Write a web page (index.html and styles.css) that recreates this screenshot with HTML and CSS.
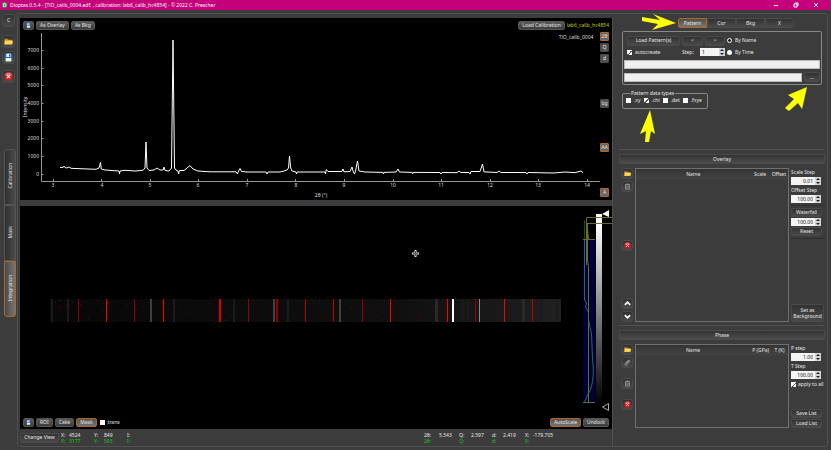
FILE: index.html
```html
<!DOCTYPE html>
<html lang="en">
<head>
    <meta charset="UTF-8">
    <title>Dioptas 0.5.4</title>
    <link rel="stylesheet" href="styles.css">
</head>
<body>
    <svg class="sprite" aria-hidden="true">
        <symbol id="folder" viewBox="0 0 16 16">
            <path d="M1 3h5l2 2h6v8H1z" fill="#c98a10"/>
            <path d="M1 13V6h14v7z" fill="#f3bd35"/>
            <path d="M1 13l2-6h13l-2 6z" fill="#ffd75e"/>
        </symbol>
        <symbol id="disk" viewBox="0 0 16 16">
            <path d="M1 1h14v14H1z" fill="#2467b5"/>
            <path d="M4 1h8v6H4z" fill="#e6f1ff"/>
            <path d="M9 2h2v4H9z" fill="#1c4d8c"/>
            <path d="M3 9h10v6H3z" fill="#fff7bd"/>
        </symbol>
        <symbol id="clear" viewBox="0 0 16 16">
            <circle cx="8" cy="8" r="7.5" fill="#d5171c"/>
            <path d="M2 6a6 5 0 0 1 12 0" fill="#ed6262"/>
            <path d="M5 5l6 6M11 5l-6 6" stroke="#fff" stroke-width="2"/>
        </symbol>
        <symbol id="trash" viewBox="0 0 16 16">
            <path d="M2 4h12M6 4V2h4v2M3.500 4v10h9V4M6.500 6v6M9.500 6v6" fill="none" stroke="#aaa" stroke-width="1.500"/>
        </symbol>
        <symbol id="clip" viewBox="0 0 16 16">
            <path d="M4 10l6-7c2-2 5 0 3 3l-7 8c-3 2-5-1-3-4l7-7M6 11l5-6" fill="none" stroke="#bbb" stroke-width="1.500"/>
        </symbol>
        <symbol id="up" viewBox="0 0 16 16">
            <path d="M2 11l6-6 6 6" fill="none" stroke="#fff" stroke-width="4"/>
        </symbol>
        <symbol id="down" viewBox="0 0 16 16">
            <path d="M2 5l6 6 6-6" fill="none" stroke="#fff" stroke-width="4"/>
        </symbol>
        <symbol id="spin" viewBox="0 0 6 8">
            <path d="M0 0h6v8H0z" fill="#d4d4d4"/>
            <path d="M1 3l2-2 2 2zM1 5l2 2 2-2z" fill="#222"/>
        </symbol>
    </svg>

    <header class="titlebar">
        <svg class="app-icon" viewBox="0 0 12 12"><path d="M0 0h12v12H0z" fill="#2d9b4a"/><path d="M4 2v8h2a4 4 0 0 0 0-8z" fill="none" stroke="#fff" stroke-width="2"/></svg>
        <span class="title">Dioptas 0.5.4 - [TiO_calib_0004.edf, , calibration: lab6_calib_hc4854] - © 2022 C. Prescher</span>
        <div class="window-buttons">
            <button aria-label="Minimize"><svg viewBox="0 0 6 6"><path d="M1 3.500h4"/></svg></button>
            <button aria-label="Restore"><svg viewBox="0 0 6 6"><path d="M1 2h3v3H1zM2 2V1h3v3H4"/></svg></button>
            <button aria-label="Close"><svg viewBox="0 0 6 6"><path d="M1 1l4 4M5 1L1 5"/></svg></button>
        </div>
    </header>

    <main class="app">
        <nav class="rail">
            <div class="rail-tools">
                <button class="tool rail-c">C</button>
                <button class="tool" aria-label="Open"><svg class="icon"><use href="#folder"/></svg></button>
                <button class="tool rail-save" aria-label="Save"><svg class="icon"><use href="#disk"/></svg></button>
                <button class="tool" aria-label="Reset"><svg class="icon"><use href="#clear"/></svg></button>
            </div>
            <div class="modes">
                <button class="mode"><span>Calibration</span></button>
                <button class="mode"><span>Mask</span></button>
                <button class="mode selected"><span>Integration</span></button>
            </div>
        </nav>

        <div class="workspace">
            <div class="views">
                <section class="plot pattern">
                    <div class="bar">
                        <button class="btn save" aria-label="Save pattern"><svg><use href="#disk"/></svg></button>
                        <button class="btn">As Overlay</button>
                        <button class="btn">As Bkg</button>
                        <button class="btn push">Load Calibration</button>
                        <span class="calib">lab6_calib_hc4854</span>
                    </div>
                    <div class="plot-body">
                        <svg class="chart" viewBox="21 31 579 168">
                            <path class="axis" d="M41.500 33v148.500H600M41.500 50.500h2M41.500 68.500h2M41.500 85.500h2M41.500 103.500h2M41.500 121.500h2M41.500 138.500h2M41.500 156.500h2M41.500 174.500h2M53.500 181v-2M101.500 181v-2M150.500 181v-2M198.500 181v-2M247.500 181v-2M295.500 181v-2M344.500 181v-2M393.500 181v-2M441.500 181v-2M490.500 181v-2M538.500 181v-2M587.500 181v-2"/>
                            <g class="ylabels">
                                <text x="39" y="52">7000</text>
                                <text x="39" y="70">6000</text>
                                <text x="39" y="87">5000</text>
                                <text x="39" y="105">4000</text>
                                <text x="39" y="123">3000</text>
                                <text x="39" y="140">2000</text>
                                <text x="39" y="158">1000</text>
                                <text x="39" y="176">0</text>
                            </g>
                            <g class="xlabels">
                                <text x="53" y="187">3</text>
                                <text x="102" y="187">4</text>
                                <text x="150" y="187">5</text>
                                <text x="198" y="187">6</text>
                                <text x="247" y="187">7</text>
                                <text x="296" y="187">8</text>
                                <text x="344" y="187">9</text>
                                <text x="393" y="187">10</text>
                                <text x="441" y="187">11</text>
                                <text x="490" y="187">12</text>
                                <text x="538" y="187">13</text>
                                <text x="587" y="187">14</text>
                                <text x="321" y="197">2θ (°)</text>
                                <text x="576" y="39">TiO_calib_0004</text>
                                <text transform="translate(27 107) rotate(-90)">Intensity</text>
                            </g>
                            <polyline class="curve" points="60,167.3 63,167.5 64,166 65,167.5 67,168 69,167 71,168.300 80,168.700 96,169.300 99,168 100.500,162.500 101.300,169 105,170 119,171 119.500,174 120,171 125,170.300 135,171 143,170.300 145,168 146,142 147,168 149,170.500 154,170 157,168 160,170 163,170 164,167 165,170.500 169,171 171.500,168 173,40 174.500,168 176,170 178,171 178.500,174 179.500,170.500 184,170.500 187,168 190,165.500 193,169 198,171 210,171.800 236,171.800 237.500,174 238.500,171 240,168.500 241.500,171.500 247,172 266,172 267,174 268,172 280,172 284,171 287,170 288.500,168 289.500,156 290.700,168 292,171 296,172 296.500,174 297,172 325,172 325.500,174 326.300,169.500 328,171.500 342,171.500 343,169 344,171.800 350,171.500 352,167 353,171 354.500,174 355.500,171 357.500,161 359,171 365,172 383,172.400 383.500,174 384,172.400 396,172 398,169 399.500,172 412,172.400 412.500,174 413,172.400 440,172.500 441,174 442,172.500 457,172.700 459,171 461,172.500 469,172.500 470,174 471,171.500 480,171.500 482.500,164 484,171.800 497,172.500 499,171 501,172.500 526,172.500 527,174 528,172.500 554,173 565,172 575,172.700 581,171 583,172.700"/>
                        </svg>
                        <div class="units">
                            <div class="unit-group">
                                <button class="unit on">2θ</button>
                                <button class="unit">Q</button>
                                <button class="unit">d</button>
                            </div>
                            <button class="unit">bg</button>
                            <button class="unit on">AA</button>
                            <button class="unit on">A</button>
                        </div>
                    </div>
                </section>

                <section class="plot image">
                    <svg class="chart" viewBox="20 206 592 209">
                        <defs>
                            <linearGradient id="strip"><stop offset="0" stop-color="#070707"/><stop offset=".7" stop-color="#101010"/><stop offset="1" stop-color="#202020"/></linearGradient>
                            <linearGradient id="levels" x2="0" y2="1"><stop offset=".05" stop-color="#fff"/><stop offset="1" stop-color="#000"/></linearGradient>
                        </defs>
                        <path d="M50 299h511v23H50z" fill="url(#strip)"/>
                        <g class="lines">
                            <path d="M52 299v23M68 299v23M174 299v23M234 299v23M288 299v23M541 299v23M463 299v23M468 299v23M557 299v23" stroke="#1a1a1a" stroke-width="2"/>
                            <path d="M436.500 299v23M523.500 299v23" stroke="#292929" stroke-width="3"/>
                            <path d="M151 299v23M274 299v23M340 299v23" stroke="#404040" stroke-width="2"/>
                            <path d="M479.500 299v23" stroke="#888"/>
                            <path d="M78.500 299v23M134.500 299v23M248.500 299v23M362.500 299v23M475.500 299v23" stroke="#950000"/>
                            <path d="M277 299v23" stroke="#900000" stroke-width="2"/>
                            <path d="M305.500 299v23M333.500 299v23M532.500 299v23" stroke="#b80000"/>
                            <path d="M106.500 299v23M163.500 299v23M390.500 299v23M447.500 299v23M504.500 299v23" stroke="#f80000"/>
                            <path d="M220 299v23" stroke="#d80000" stroke-width="2"/>
                            <path d="M453 299v23" stroke="#fff" stroke-width="2"/>
                            <path d="M55 302.500h1M60 300.500h1M61 306.500h1M66 304.500h1M68 306.500h1M72 302.500h1M58 307.500h1M80 304.500h1M82 302.500h1M88 318.500h1M97 300.500h1M101 302.500h1M102 310.500h1M109 302.500h1M114 302.500h1M126 305.500h1M143 306.500h1M148 302.500h1M122 315.500h1M168 309.500h1M180 308.500h1M186 312.500h1M194 316.500h1M209 303.500h1M225 320.500h1M230 316.500h1M253 300.500h1M293 315.500h1M312 301.500h1M322 318.500h1M351 307.500h1M366 310.500h1M371 314.500h1M376 316.500h1M381 303.500h1M411 300.500h1M418 317.500h1M420 315.500h1M432 306.500h1M438 306.500h1M485 303.500h1M487 300.500h1M481 307.500h1M499 317.500h1M513 313.500h1M544 310.500h1M550 318.500h1M555 313.500h1" stroke="#700000"/>
                        </g>
                        <path d="M583 239.500h12.500V402H583z" fill="#000034"/>
                        <path d="M584.500 220v20" stroke="#1c5208"/>
                        <path d="M584.500 240v60l2 3-1 4 3 5v8l3 14 1 25c2 15 0 30-5 36l-3 7" fill="none" stroke="#246b5d"/>
                        <path d="M612 217.500h-25.500V265M612 223.500h-25M587.500 223v38l1 5v136M583 239.500h12M583 402.500h12M587 223l1.500 16" fill="none" stroke="#686b32"/>
                        <path d="M596 214h6v190h-6z" fill="url(#levels)"/>
                        <path d="M596 217.500h6M596 223.500h6" stroke="#686b32"/>
                        <path d="M602 214l7-4v7z" fill="#fff"/>
                        <path d="M602.500 407l6-3.500v7z" fill="none" stroke="#aaa"/>
                        <path d="M412 253.500h7M415.500 250v7" stroke="#ddd" stroke-width="2"/>
                        <path d="M413 253.500h5M415.500 251v5" stroke="#556"/>
                    </svg>
                    <div class="bar">
                        <button class="btn save" aria-label="Save image"><svg><use href="#disk"/></svg></button>
                        <button class="btn">ROI</button>
                        <button class="btn">Cake</button>
                        <button class="btn on">Mask</button>
                        <label class="check"><input type="checkbox">trans</label>
                        <button class="btn push on">AutoScale</button>
                        <button class="btn">Undock</button>
                    </div>
                </section>

                <footer class="status">
                    <button class="flat">Change View</button>
                    <div class="mouse">
                        <span>X:</span><span>4524</span><span>Y:</span><span>849</span><span>I:</span>
                        <span class="click">X:</span><span class="click">3177</span><span class="click">Y:</span><span class="click">593</span><span class="click">I:</span>
                    </div>
                    <div class="mouse angles">
                        <span>2θ:</span><span>5.543</span><span>Q:</span><span>2.597</span><span>d:</span><span>2.419</span><span>X:</span><span>-179.705</span>
                        <span class="click">2θ:</span><span></span><span class="click">Q:</span><span></span><span class="click">d:</span><span></span><span class="click">X:</span><span></span>
                    </div>
                </footer>
            </div>

            <aside class="side">
                <section class="settings">
                    <div class="tabs">
                        <button class="tab selected">Pattern</button>
                        <button class="tab">Cor</button>
                        <button class="tab">Bkg</button>
                        <button class="tab">X</button>
                    </div>
                    <div class="group files">
                        <div class="loader">
                            <button class="flat">Load Pattern(s)</button>
                            <button class="flat">&lt;</button>
                            <button class="flat">&gt;</button>
                            <label class="check"><input type="radio" name="by" checked>By Name</label>
                            <label class="check"><input type="checkbox" checked>autocreate</label>
                            <div class="step">
                                <label for="step">Step:</label>
                                <span class="spin left"><input id="step" type="number" value="1"><svg><use href="#spin"/></svg></span>
                            </div>
                            <label class="check"><input type="radio" name="by">By Time</label>
                        </div>
                        <input class="line" type="text" aria-label="Pattern file">
                        <div class="path">
                            <input class="line" type="text" aria-label="Pattern folder">
                            <button class="flat">...</button>
                        </div>
                    </div>
                    <fieldset class="group types">
                        <legend>Pattern data types</legend>
                        <label class="check"><input type="checkbox">.xy</label>
                        <label class="check"><input type="checkbox" checked>.chi</label>
                        <label class="check"><input type="checkbox">.dat</label>
                        <label class="check"><input type="checkbox">.fxye</label>
                    </fieldset>
                </section>

                <button class="heading">Overlay</button>
                <section class="list overlay">
                    <div class="list-tools">
                        <button class="tool" aria-label="Add overlay"><svg class="icon"><use href="#folder"/></svg></button>
                        <button class="tool" aria-label="Delete overlay"><svg class="icon"><use href="#trash"/></svg></button>
                        <button class="tool middle" aria-label="Clear overlays"><svg class="icon"><use href="#clear"/></svg></button>
                        <button class="tool" aria-label="Move up"><svg class="icon"><use href="#up"/></svg></button>
                        <button class="tool" aria-label="Move down"><svg class="icon"><use href="#down"/></svg></button>
                    </div>
                    <div class="table-box">
                        <table>
                            <thead><tr><th>Name</th><th>Scale</th><th>Offset</th></tr></thead>
                        </table>
                    </div>
                    <div class="controls">
                        <label for="scale">Scale Step</label>
                        <span class="spin"><input id="scale" type="number" step="0.01" value="0.01"><svg><use href="#spin"/></svg></span>
                        <label for="offset">Offset Step</label>
                        <span class="spin"><input id="offset" type="number" value="100.00"><svg><use href="#spin"/></svg></span>
                        <hr>
                        <button class="flat">Waterfall</button>
                        <span class="spin"><input aria-label="Waterfall step" type="number" value="100.00"><svg><use href="#spin"/></svg></span>
                        <button class="flat">Reset</button>
                        <hr>
                        <button class="flat tall bottom">Set as Background</button>
                    </div>
                </section>

                <button class="heading">Phase</button>
                <section class="list phase">
                    <div class="list-tools">
                        <button class="tool" aria-label="Add phase"><svg class="icon"><use href="#folder"/></svg></button>
                        <button class="tool" aria-label="Edit phase"><svg class="icon"><use href="#clip"/></svg></button>
                        <button class="tool apart" aria-label="Delete phase"><svg class="icon"><use href="#trash"/></svg></button>
                        <button class="tool apart" aria-label="Clear phases"><svg class="icon"><use href="#clear"/></svg></button>
                    </div>
                    <div class="table-box">
                        <table>
                            <thead><tr><th>Name</th><th>P (GPa)</th><th>T (K)</th></tr></thead>
                        </table>
                    </div>
                    <div class="controls">
                        <label for="pstep">P step</label>
                        <span class="spin"><input id="pstep" type="number" value="1.00"><svg><use href="#spin"/></svg></span>
                        <label for="tstep">T Step</label>
                        <span class="spin"><input id="tstep" type="number" value="100.00"><svg><use href="#spin"/></svg></span>
                        <label class="check"><input type="checkbox" checked>apply to all</label>
                        <button class="flat bottom">Save List</button>
                        <button class="flat">Load List</button>
                    </div>
                </section>

                <!-- pointers to the controls used for pattern files -->
                <svg class="pointer to-tab" viewBox="0 0 34 16"><path d="M0 3l18 3-7-6 23 9-24 7 6-6L0 7z"/></svg>
                <svg class="pointer to-path" viewBox="0 0 24 26"><path d="M23 1l-5 22-4-6-9 8-4-3 9-9-6-4z"/></svg>
                <svg class="pointer to-types" viewBox="0 0 16 34"><path d="M10 1l5 24-4-3-2 11H5l1-11-6 3z"/></svg>
            </aside>
        </div>
    </main>
</body>
</html>
```

FILE: styles.css
```css
* { box-sizing: border-box; }
body {
    margin: 0;
    min-height: 100vh;
    display: flex;
    flex-direction: column;
    background: #3c3c3c;
    color: #e6e6e6;
    font: 5px/7px "Noto Sans", sans-serif;
}
button, input {
    font: inherit;
    color: inherit;
    margin: 0;
    padding: 0;
}
button {
    border: 1px solid #4a4a4a;
    border-radius: 2px;
    background: linear-gradient(#323232, #4a4a4a);
    white-space: nowrap;
}
.sprite { position: absolute; width: 0; height: 0; }

/* title bar */
.titlebar {
    height: 10px;
    display: flex;
    align-items: center;
    gap: 3px;
    padding: 0 12px 0 2px;
    background: #c4007a;
    color: #fff;
}
.app-icon { width: 5px; height: 6px; }
.window-buttons {
    display: flex;
    gap: 14px;
    margin-left: auto;
}
.window-buttons button {
    display: flex;
    border: none;
    background: none;
}
.window-buttons svg {
    width: 6px;
    height: 6px;
    fill: none;
    stroke: #fff;
    stroke-width: 1;
}

/* left rail */
.app {
    flex: 1;
    display: flex;
    padding: 3px 3px 3px 0;
}
.rail {
    width: 17px;
    padding-top: 1px;
}
.rail-tools {
    display: flex;
    flex-direction: column;
    align-items: center;
    gap: 3px;
}
.tool {
    width: 12px;
    height: 11px;
    display: flex;
    align-items: center;
    justify-content: center;
    border-radius: 3px;
}
.rail .tool {
    width: 13px;
    height: 13px;
}
.icon { width: 7px; height: 7px; }
.rail .icon { width: 9px; height: 9px; }
.rail-c { margin-bottom: 5px; }
.rail-save { margin-bottom: 3px; }
.modes {
    display: flex;
    flex-direction: column;
    margin: 66px 1px 0 4px;
}
.mode {
    height: 56px;
    border-radius: 0;
    border-color: #555;
    background: linear-gradient(90deg, #303030, #4b4b4b);
}
.mode:first-child { border-top-right-radius: 3px; border-top-left-radius: 3px; }
.mode:last-child { border-bottom-right-radius: 3px; border-bottom-left-radius: 3px; }
.mode span {
    writing-mode: vertical-rl;
    transform: rotate(180deg);
}
.mode.selected {
    border-color: #b5651d;
    background: linear-gradient(90deg, #4a4a4a, #757575);
}

/* plots */
.workspace {
    flex: 1;
    display: flex;
    gap: 5px;
    padding: 4px 0 0 2px;
    border: 1px solid #505050;
    border-radius: 3px;
}
.views {
    flex: 1;
    min-width: 0;
    display: grid;
    grid-template-rows: 182fr 229fr 17px;
    border-right: 1px solid #505050;
}
.plot {
    display: flex;
    flex-direction: column;
    min-height: 0;
    background: #000;
}
.image { margin-top: 6px; }
.bar {
    display: flex;
    align-items: center;
    gap: 2px;
    height: 13px;
    padding: 2px 3px 0;
}
.image .bar { height: 14px; padding: 0 3px; }
.btn {
    height: 9px;
    padding: 0 3px;
    border-color: #555;
    background: linear-gradient(#5a5a5a, #3c3c3c);
    line-height: 7px;
}
.btn.save {
    display: flex;
    align-items: center;
    justify-content: center;
    width: 11px;
}
.btn svg { width: 5px; height: 5px; flex: none; }
.on { border-color: #b5651d; background: linear-gradient(#555, #707070); }
.push { margin-left: auto; }
.calib { color: #c8c800; }
.plot-body {
    flex: 1;
    min-height: 0;
    display: flex;
    padding: 0 3px 1px 1px;
}
.chart {
    display: block;
    flex: 1;
    min-width: 0;
    min-height: 0;
}
.chart text { fill: #ddd; }
.axis { fill: none; stroke: #969696; }
.ylabels { text-anchor: end; }
.xlabels { text-anchor: middle; }
.curve { fill: none; stroke: #fff; }
.lines { shape-rendering: crispEdges; }
.units {
    width: 9px;
    display: flex;
    flex-direction: column;
    justify-content: space-between;
    padding: 1px 0 2px;
}
.unit-group { display: grid; gap: 2px; }
.unit {
    height: 9px;
    border-radius: 1px;
    background: #505050;
    line-height: 7px;
}
.unit.on { border-color: #b5651d; background: #666; }

/* status row */
.status {
    display: flex;
    align-items: center;
}
.flat { height: 10px; line-height: 7px; }
.status .flat { width: 39px; }
.mouse {
    display: grid;
    grid-template-columns: 8px 25px 10px 23px 5px;
    grid-auto-rows: 6px;
    margin-left: 2px;
    line-height: 6px;
}
.angles {
    grid-template-columns: 15px 20px 12px 21px 11px 22px 8px 24px;
    margin: 0 55px 0 auto;
}
.click { color: #1c1; }

/* right side */
.side {
    position: relative;
    width: 209px;
    display: flex;
    flex-direction: column;
    padding: 0 2px 18px 1px;
}
.settings {
    height: 132px;
    padding: 0 3px;
    border-bottom: 1px solid #505050;
}
.tabs {
    display: grid;
    grid-template-columns: repeat(4, 29px);
    margin-left: 56px;
}
.tab {
    height: 10px;
    border-radius: 0;
    line-height: 7px;
}
.tab:last-child { border-radius: 0 4px 4px 0; }
.tab.selected {
    border-color: #b5651d;
    border-radius: 2px 0 0 2px;
    background: linear-gradient(#505050, #757575);
}
.group {
    border: 1px solid #888;
    border-radius: 2px;
}
.files {
    display: flex;
    flex-direction: column;
    gap: 3px;
    margin-top: 3px;
    padding: 3px 1px 2px;
}
.loader {
    display: grid;
    grid-template-columns: 53px 21px 20px 1fr;
    grid-template-rows: 11px 10px;
    column-gap: 2px;
    row-gap: 1px;
    padding-left: 3px;
    align-items: center;
}
.step {
    grid-column: span 2;
    display: flex;
    justify-content: space-between;
    align-items: center;
}
.step .spin { width: 25px; }
.check {
    display: flex;
    align-items: center;
    gap: 3px;
    white-space: nowrap;
}
.check input {
    appearance: none;
    flex: none;
    width: 5px;
    height: 5px;
    background: #fff;
}
.check input[type="radio"] { border-radius: 50%; }
.check input[type="radio"]:checked { border: 1px solid #fff; background: #222; }
.check input[type="checkbox"]:checked {
    background: linear-gradient(135deg, #fff 50%, #555 50%, #555 62%, #fff 62%);
}
.image .check { margin-left: 1px; }
.line {
    width: 100%;
    height: 9px;
    border: 1px solid #bbb;
    background: #f0f0f0;
    color: #111;
}
.path {
    display: flex;
    align-items: center;
    gap: 2px;
}
.path .flat { width: 16px; flex: none; }
.types {
    display: flex;
    gap: 3px;
    width: 86px;
    margin: 5px 0 0;
    padding: 0 3px 4px;
}
.types legend { padding: 0 1px; margin-left: 4px; }
.heading {
    height: 10px;
    margin-top: 4px;
    border-radius: 0;
    line-height: 7px;
    background: linear-gradient(#333, #4d4d4d);
}
.list {
    display: flex;
    gap: 2px;
    margin-top: 4px;
    padding-left: 2px;
}
.overlay {
    flex: 1;
    padding-bottom: 3px;
    border-bottom: 1px solid #505050;
}
.phase { height: 84px; }
.list-tools {
    display: flex;
    flex-direction: column;
    gap: 2px;
}
.middle { margin: auto 0; }
.apart { margin-top: 8px; }
.table-box {
    flex: 1;
    border: 1px solid #707070;
}
table { width: 100%; border-collapse: collapse; }
th {
    height: 10px;
    padding: 0 2px;
    font-weight: normal;
    background: linear-gradient(#333, #444);
}
th:nth-child(2) { width: 19px; white-space: nowrap; }
th:nth-child(3) { width: 17px; white-space: nowrap; }
.controls {
    width: 34px;
    display: flex;
    flex-direction: column;
    gap: 1px;
}
.controls label { white-space: nowrap; line-height: 8px; }
.controls .check { gap: 2px; }
.spin {
    display: flex;
    width: 30px;
    height: 8px;
    background: #f4f4f4;
}
.spin input {
    flex: 1;
    min-width: 0;
    padding-right: 2px;
    border: none;
    appearance: textfield;
    background: none;
    color: #111;
    text-align: right;
}
.spin input::-webkit-inner-spin-button { display: none; }
.spin.left input { text-align: left; padding-left: 2px; }
.spin svg { width: 6px; height: 8px; flex: none; }
.controls hr {
    width: 100%;
    margin: 1px 0;
    border: none;
    border-top: 1px solid #303030;
}
.controls .flat { width: 31px; height: 9px; flex: none; }
.controls .tall {
    width: 33px;
    height: 18px;
    white-space: normal;
    line-height: 6px;
}
.controls .bottom { margin-top: auto; }

/* arrows over the panel */
.pointer {
    position: absolute;
    fill: #ff0;
    pointer-events: none;
}
.to-tab { left: 24px; top: -4px; width: 34px; height: 16px; }
.to-path { left: 166px; top: 68px; width: 24px; height: 26px; }
.to-types { left: 22px; top: 91px; width: 16px; height: 34px; }
```
